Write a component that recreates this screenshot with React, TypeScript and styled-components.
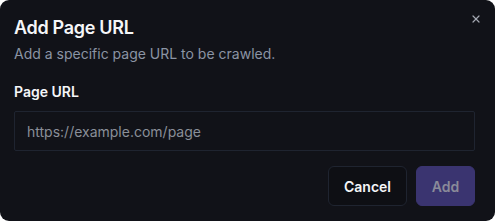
import styled, { createGlobalStyle } from "styled-components";

const Global = createGlobalStyle`
  html, body {
    margin: 0;
    padding: 0;
    background: #ffffff;
  }
  * {
    box-sizing: border-box;
  }
`;

const App = () => {
  return (
    <>
      <Global />
      <Dialog>
        <CloseButton aria-label="Close">
          <svg width="12" height="12" viewBox="0 0 24 24" fill="none" stroke="currentColor" strokeWidth="2.4" strokeLinecap="round">
            <path d="M18 6 6 18" />
            <path d="m6 6 12 12" />
          </svg>
        </CloseButton>
        <Header>
          <Title>Add Page URL</Title>
          <Description>Add a specific page URL to be crawled.</Description>
        </Header>
        <Field>
          <Label htmlFor="page-url">Page URL</Label>
          <Input id="page-url" placeholder="https://example.com/page" />
        </Field>
        <Footer>
          <Button $width={79}>Cancel</Button>
          <Button $primary $width={59} disabled>
            Add
          </Button>
        </Footer>
      </Dialog>
    </>
  );
};

export default App;

const Dialog = styled.div`
  position: relative;
  width: 495px;
  height: 221px;
  background-color: #111218;
  border-radius: 9px;
  padding: 17px 20px 15px 14px;
  display: flex;
  flex-direction: column;
  font-family: Inter, "Liberation Sans", sans-serif;
  color: #f5f6f8;
`;

const CloseButton = styled.button`
  position: absolute;
  top: 13px;
  right: 13px;
  width: 12px;
  height: 12px;
  padding: 0;
  border: none;
  background: transparent;
  color: #a3a7b0;
  display: flex;
  align-items: center;
  justify-content: center;
  cursor: pointer;
`;

const Header = styled.div`
  display: flex;
  flex-direction: column;
  gap: 5px;
`;

const Title = styled.h2`
  margin: 0;
  font-size: 18px;
  line-height: 22px;
  font-weight: 600;
  letter-spacing: -0.3px;
`;

const Description = styled.p`
  margin: 0;
  font-size: 14px;
  line-height: 20px;
  color: #8b94a4;
`;

const Field = styled.div`
  display: flex;
  flex-direction: column;
  gap: 10px;
  margin-top: 19px;
`;

const Label = styled.label`
  font-size: 14px;
  line-height: 18px;
  font-weight: 600;
  color: #f5f6f8;
`;

const Input = styled.input`
  height: 40px;
  width: 100%;
  background: transparent;
  border: 1px solid #1f2430;
  border-radius: 2px;
  padding: 0 12px;
  font-family: inherit;
  font-size: 14px;
  color: #f5f6f8;
  outline: none;
  &::placeholder {
    color: #8a8f99;
  }
`;

const Footer = styled.div`
  display: flex;
  justify-content: flex-end;
  gap: 9px;
  margin-top: auto;
`;

const Button = styled.button<{ $primary?: boolean; $width: number }>`
  height: 40px;
  width: ${(p) => p.$width}px;
  padding: 0;
  border-radius: 6px;
  font-family: inherit;
  font-size: 14px;
  font-weight: 600;
  cursor: pointer;
  border: 1px solid ${(p) => (p.$primary ? "#3a3470" : "#1f2430")};
  background-color: ${(p) => (p.$primary ? "#3a3470" : "#0e0f14")};
  color: ${(p) => (p.$primary ? "#8a8a99" : "#f5f6f8")};
  &:disabled {
    cursor: default;
  }
`;
